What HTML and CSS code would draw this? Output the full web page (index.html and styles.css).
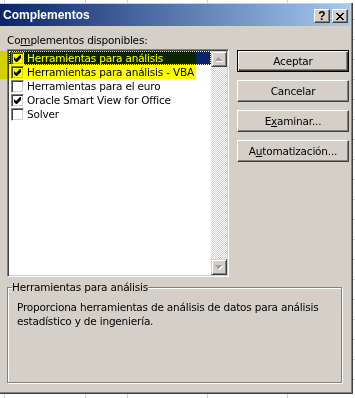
FILE: index.html
```html
<!DOCTYPE html>
<html lang="es">
<head>
  <meta charset="UTF-8">
  <meta name="viewport" content="width=device-width, initial-scale=1.0">
  <title>Complementos</title>
  <link rel="stylesheet" href="styles.css">
</head>
<body>
  <div class="dialog">
    <div class="titlebar">
      <span class="title">Complementos</span>
      <div class="caption-buttons">
        <button class="caption-btn help">?</button>
        <button class="caption-btn close">
          <svg width="8" height="7" viewBox="0 0 8 7"><path d="M0 0h2v1H0zM6 0h2v1H6zM1 1h2v1H1zM5 1h2v1H5zM2 2h4v1H2zM3 3h2v1H3zM2 4h4v1H2zM1 5h2v1H1zM5 5h2v1H5zM0 6h2v1H0zM6 6h2v1H6z" fill="#000"/></svg>
        </button>
      </div>
    </div>

    <div class="content">
      <div class="label">Co<u>m</u>plementos disponibles:</div>

      <div class="main">
        <div class="listbox">
          <ul class="items">
            <li class="item selected"><span class="check checked"><svg width="11" height="11" viewBox="0 0 11 11"><path d="M2 4l2 2 4-4h1v3l-4 4H4L2 7z" fill="#000"/></svg></span>Herramientas para análisis</li>
            <li class="item"><span class="check checked"><svg width="11" height="11" viewBox="0 0 11 11"><path d="M2 4l2 2 4-4h1v3l-4 4H4L2 7z" fill="#000"/></svg></span>Herramientas para análisis - VBA</li>
            <li class="item"><span class="check"></span>Herramientas para el euro</li>
            <li class="item"><span class="check checked"><svg width="11" height="11" viewBox="0 0 11 11"><path d="M2 4l2 2 4-4h1v3l-4 4H4L2 7z" fill="#000"/></svg></span>Oracle Smart View for Office</li>
            <li class="item"><span class="check"></span>Solver</li>
          </ul>
          <div class="scrollbar">
            <div class="arrow">
              <svg width="8" height="5" viewBox="0 0 8 5"><path d="M4 1h1v1H4zM3 2h3v1H3zM2 3h5v1H2zM1 4h7v1H1z" fill="#fff"/><path d="M3 0h1v1H3zM2 1h3v1H2zM1 2h5v1H1zM0 3h7v1H0z" fill="#a0a0a0"/></svg>
            </div>
            <div class="track"></div>
            <div class="arrow">
              <svg width="8" height="5" viewBox="0 0 8 5"><path d="M1 1h7v1H1zM2 2h5v1H2zM3 3h3v1H3zM4 4h1v1H4z" fill="#fff"/><path d="M0 0h7v1H0zM1 1h5v1H1zM2 2h3v1H2zM3 3h1v1H3z" fill="#a0a0a0"/></svg>
            </div>
          </div>
        </div>

        <div class="buttons">
          <button class="btn default">Aceptar</button>
          <button class="btn">Cancelar</button>
          <button class="btn">E<u>x</u>aminar...</button>
          <button class="btn">A<u>u</u>tomatización...</button>
        </div>
      </div>

      <fieldset class="group">
        <legend>Herramientas para análisis</legend>
        <p>Proporciona herramientas de análisis de datos para análisis<br>estadístico y de ingeniería.</p>
      </fieldset>
    </div>

    <!-- highlighter stroke over the first two rows -->
    <div class="marker"></div>
  </div>
</body>
</html>
```

FILE: styles.css
```css
html {
  height: 100%;
  background-color: #fff;
  background-image:
    linear-gradient(#d0d0d0, #d0d0d0),
    linear-gradient(#d0d0d0, #d0d0d0),
    linear-gradient(#d0d0d0, #d0d0d0),
    linear-gradient(#d0d0d0, #d0d0d0),
    linear-gradient(#d0d0d0, #d0d0d0),
    repeating-linear-gradient(to bottom, transparent 0 19px, #d0d0d0 19px 20px);
  background-size: 1px 100%, 1px 100%, 1px 100%, 1px 100%, 1px 100%, 100% 100%;
  background-position: 4px 0, 85px 0, 127px 0, 207px 0, 287px 0, 0 0;
  background-repeat: no-repeat;
}

body {
  margin: 0;
  font-family: "DejaVu Sans", Verdana, sans-serif;
  font-size: 10.5px;
  letter-spacing: -0.2px;
  color: #000;
}

.dialog {
  position: relative;
  width: 353px;
  height: 391px;
  margin-top: 3px;
  box-sizing: border-box;
  padding: 1px 2px 0 0;
  background: #d4d0c8;
  border-right: 1px solid #404040;
  border-bottom: 1px solid #404040;
  box-shadow: inset -1px -1px #808080;
}

.titlebar {
  display: flex;
  justify-content: space-between;
  height: 22px;
  padding: 0 2px 0 3px;
  background: linear-gradient(to right, #0a246a, #a6caf0);
}

.title {
  color: #fff;
  font-family: "Liberation Sans", Arial, sans-serif;
  font-weight: bold;
  font-size: 12px;
  letter-spacing: 0;
  line-height: 22px;
}

.caption-buttons {
  display: flex;
  gap: 2px;
  margin-top: 5px;
}

.caption-btn {
  width: 16px;
  height: 14px;
  box-sizing: border-box;
  padding: 0;
  display: flex;
  align-items: center;
  justify-content: center;
  font-family: "Liberation Sans", Arial, sans-serif;
  font-weight: bold;
  font-size: 12px;
  line-height: 12px;
  color: #000;
  background: #d4d0c8;
  border: 1px solid;
  border-color: #fff #404040 #404040 #fff;
  box-shadow: inset -1px -1px #808080;
}

.content {
  padding: 7px 0 0 7px;
}

.label {
  line-height: 14px;
}

.main {
  display: flex;
  gap: 8px;
  margin-top: 2px;
}

.listbox {
  display: flex;
  width: 222px;
  height: 228px;
  box-sizing: border-box;
  padding: 1px;
  background: #fff;
  border: 1px solid;
  border-color: #808080 #fff #fff #808080;
  box-shadow: inset 1px 1px #404040, inset -1px -1px #d4d0c8;
}

.items {
  flex: 1;
  margin: 0;
  padding: 0;
  list-style: none;
}

.item {
  display: flex;
  align-items: center;
  height: 14px;
  padding-left: 2px;
  white-space: nowrap;
}

.item.selected {
  background: #0a246a;
  color: #fff;
  outline: 1px dotted #fff;
  outline-offset: -1px;
}

.check {
  display: flex;
  align-items: center;
  justify-content: center;
  width: 13px;
  height: 13px;
  box-sizing: border-box;
  margin-right: 3px;
  background: #fff;
  border: 1px solid;
  border-color: #808080 #fff #fff #808080;
  box-shadow: inset 1px 1px #404040, inset -1px -1px #d4d0c8;
}

.check svg {
  display: block;
}

.scrollbar {
  display: flex;
  flex-direction: column;
  width: 16px;
}

.arrow {
  display: flex;
  align-items: center;
  justify-content: center;
  height: 16px;
  box-sizing: border-box;
  background: #d4d0c8;
  border: 1px solid;
  border-color: #d4d0c8 #404040 #404040 #d4d0c8;
  box-shadow: inset 1px 1px #fff, inset -1px -1px #808080;
}

.track {
  flex: 1;
  background-color: #fff;
  background-image: conic-gradient(#d4d0c8 25%, #fff 0 50%, #d4d0c8 0 75%, #fff 0);
  background-size: 2px 2px;
}

.buttons {
  display: flex;
  flex-direction: column;
  gap: 8px;
  margin-top: 1px;
}

.btn {
  width: 112px;
  height: 22px;
  box-sizing: border-box;
  padding: 0;
  font-family: inherit;
  font-size: 10.5px;
  letter-spacing: -0.2px;
  color: #000;
  background: #d4d0c8;
  border: 1px solid;
  border-color: #fff #404040 #404040 #fff;
  box-shadow: inset -1px -1px #808080;
}

.btn.default {
  border-color: #000;
  box-shadow: inset 1px 1px #fff, inset -1px -1px #404040, inset -2px -2px #808080;
}

.group {
  width: 335px;
  height: 103px;
  box-sizing: border-box;
  margin: 3px 0 0 0;
  padding: 6px 0 0 4px;
  border: 1px solid #808080;
  box-shadow: inset 1px 1px #fff, 1px 1px #fff;
}

.group legend {
  padding: 0;
  line-height: 14px;
  background: #d4d0c8;
}

.group p {
  margin: 0 0 0 5px;
  line-height: 14px;
}

.marker {
  position: absolute;
  left: 0;
  top: 48px;
  width: 196px;
  height: 28px;
  background: #ffff00;
  mix-blend-mode: multiply;
  pointer-events: none;
}
```
